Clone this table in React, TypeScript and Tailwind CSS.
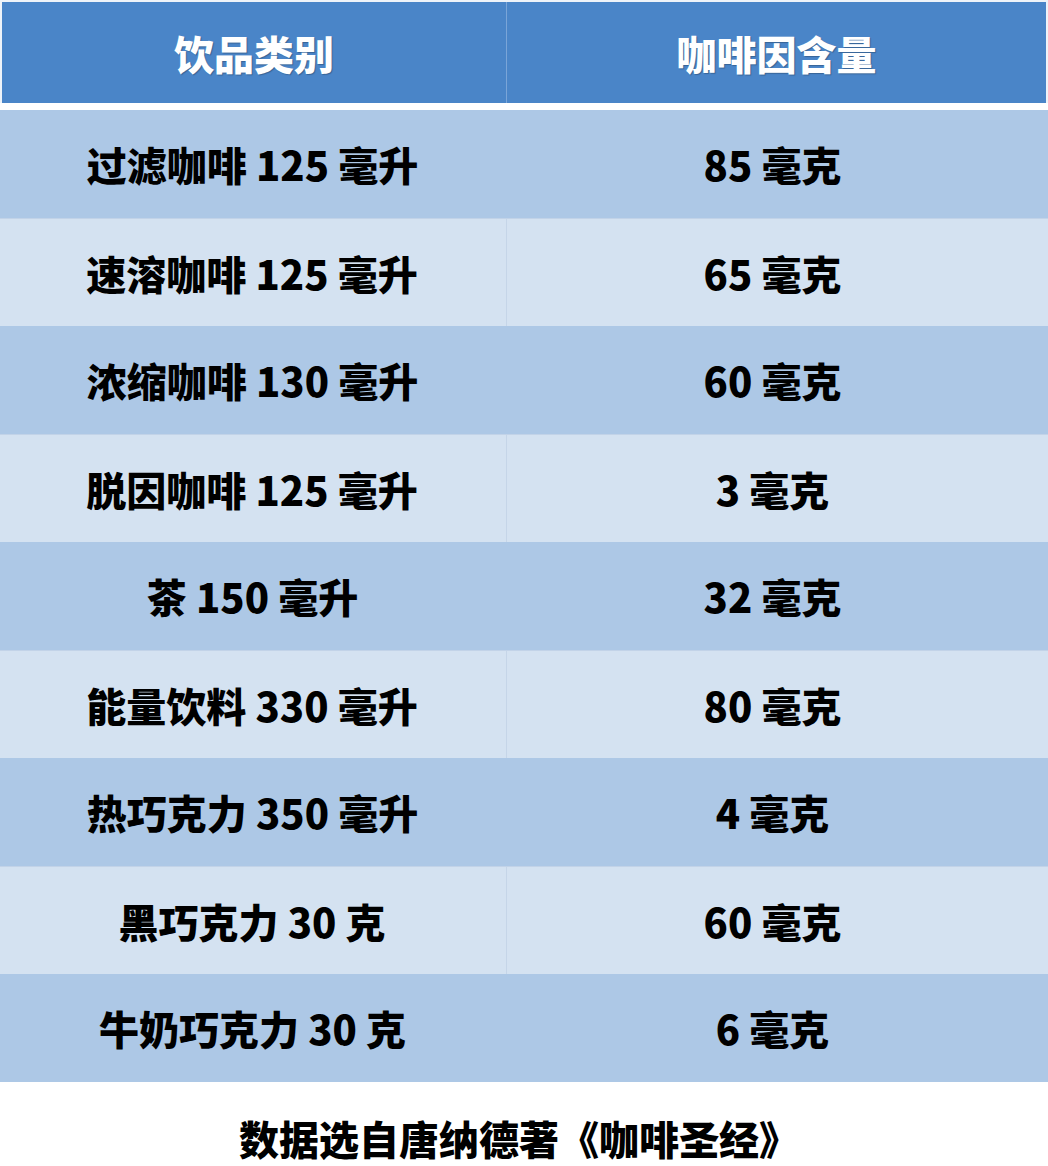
import React from "react";

const rows: [string, string][] = [
  ["过滤咖啡 125 毫升", "85 毫克"],
  ["速溶咖啡 125 毫升", "65 毫克"],
  ["浓缩咖啡 130 毫升", "60 毫克"],
  ["脱因咖啡 125 毫升", "3 毫克"],
  ["茶 150 毫升", "32 毫克"],
  ["能量饮料 330 毫升", "80 毫克"],
  ["热巧克力 350 毫升", "4 毫克"],
  ["黑巧克力 30 克", "60 毫克"],
  ["牛奶巧克力 30 克", "6 毫克"],
];

export default function App() {
  return (
    <div
      className="w-[1048px] h-[1166px] bg-white overflow-hidden"
      style={{ fontFamily: '"Noto Sans CJK SC", "Noto Sans", sans-serif' }}
    >
      <div className="pt-[2px] px-[2px] bg-[#eef3f9]">
        <div className="grid grid-cols-[505px_1fr] h-[101px] bg-[#4a85c8] text-white text-[40px] font-black">
          <div className="flex items-center justify-center border-r border-[#7aa5d8] [text-shadow:1px_1px_1px_rgba(0,0,0,0.25)]">
            饮品类别
          </div>
          <div className="flex items-center justify-center [text-shadow:1px_1px_1px_rgba(0,0,0,0.25)]">
            咖啡因含量
          </div>
        </div>
      </div>
      <div className="h-[7px] bg-white" />
      <div className="flex flex-col">
        {rows.map(([a, b], i) => (
          <div
            key={i}
            className={`grid grid-cols-[507px_1fr] h-[108px] text-[40px] font-black text-black ${
              i % 2 === 0
                ? "bg-[#adc8e6]"
                : "bg-[#d4e2f1] border-t border-[#c2d3e8]"
            }`}
          >
            <div
              className={`flex items-center justify-center pr-[2px] ${
                i % 2 === 0 ? "" : "border-r border-[#c5d5e8]"
              }`}
            >
              {a}
            </div>
            <div className="flex items-center justify-center pr-[10px]">{b}</div>
          </div>
        ))}
      </div>
      <div className="h-[83px] flex items-center justify-center pt-[28px] pr-[10px] text-[40px] font-black text-black">
        数据选自唐纳德著《咖啡圣经》
      </div>
    </div>
  );
}
